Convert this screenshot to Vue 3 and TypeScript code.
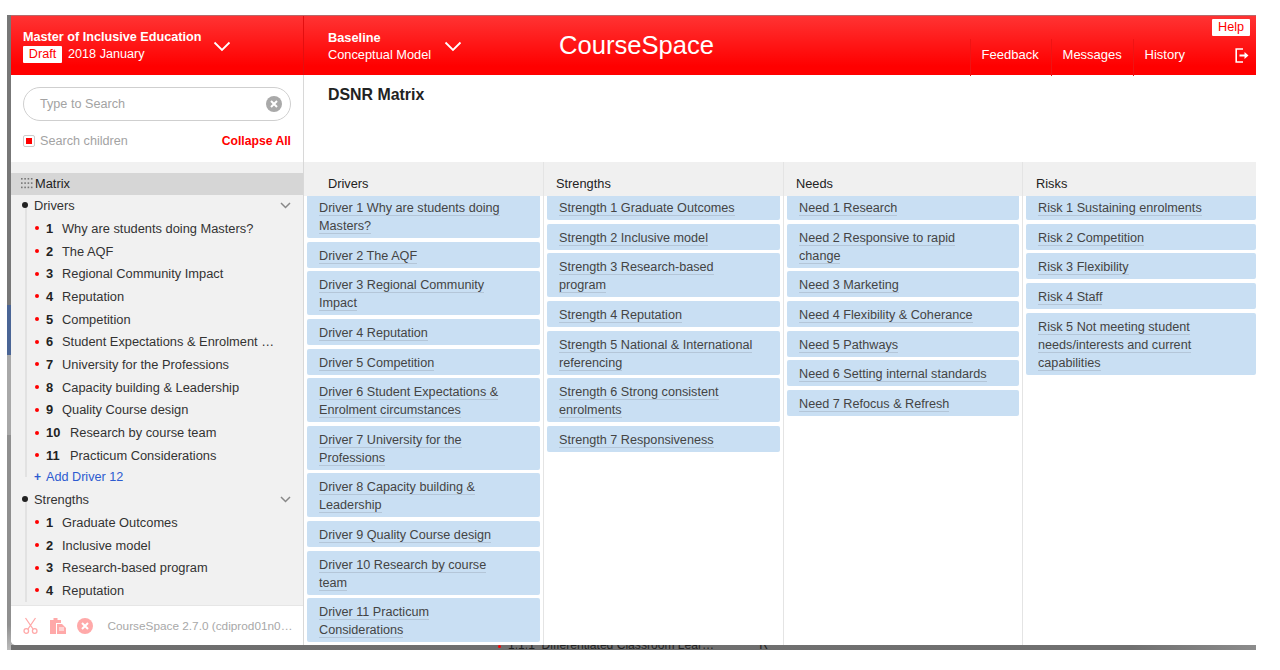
<script setup lang="ts">
interface Section {
  name: string;
  items: string[];
  add?: string;
}

const tree: Section[] = [
  {
    name: "Drivers",
    items: [
      "Why are students doing Masters?",
      "The AQF",
      "Regional Community Impact",
      "Reputation",
      "Competition",
      "Student Expectations & Enrolment …",
      "University for the Professions",
      "Capacity building & Leadership",
      "Quality Course design",
      "Research by course team",
      "Practicum Considerations",
    ],
    add: "Add Driver 12",
  },
  {
    name: "Strengths",
    items: ["Graduate Outcomes", "Inclusive model", "Research-based program", "Reputation"],
  },
];

const columns = [
  {
    title: "Drivers",
    cards: [
      ["Driver 1 Why are students doing", "Masters?"],
      ["Driver 2 The AQF"],
      ["Driver 3 Regional Community", "Impact"],
      ["Driver 4 Reputation"],
      ["Driver 5 Competition"],
      ["Driver 6 Student Expectations &", "Enrolment circumstances"],
      ["Driver 7 University for the", "Professions"],
      ["Driver 8 Capacity building &", "Leadership"],
      ["Driver 9 Quality Course design"],
      ["Driver 10 Research by course", "team"],
      ["Driver 11 Practicum", "Considerations"],
    ],
  },
  {
    title: "Strengths",
    cards: [
      ["Strength 1 Graduate Outcomes"],
      ["Strength 2 Inclusive model"],
      ["Strength 3 Research-based", "program"],
      ["Strength 4 Reputation"],
      ["Strength 5 National & International", "referencing"],
      ["Strength 6 Strong consistent", "enrolments"],
      ["Strength 7 Responsiveness"],
    ],
  },
  {
    title: "Needs",
    cards: [
      ["Need 1 Research"],
      ["Need 2 Responsive to rapid", "change"],
      ["Need 3 Marketing"],
      ["Need 4 Flexibility & Coherance"],
      ["Need 5 Pathways"],
      ["Need 6 Setting internal standards"],
      ["Need 7 Refocus & Refresh"],
    ],
  },
  {
    title: "Risks",
    cards: [
      ["Risk 1 Sustaining enrolments"],
      ["Risk 2 Competition"],
      ["Risk 3 Flexibility"],
      ["Risk 4 Staff"],
      ["Risk 5 Not meeting student", "needs/interests and current", "capabilities"],
    ],
  },
];
</script>

<template>
  <div class="page">
    <div class="frame">
      <div class="app">
        <header class="topbar">
          <div class="course">
            <div class="course-text">
              <div class="course-name">Master of Inclusive Education</div>
              <div class="course-sub"><span class="draft">Draft</span>2018 January</div>
            </div>
            <svg class="chev" width="18" height="11" viewBox="0 0 18 11"><path d="M1.5 1.5 9 9l7.5-7.5" fill="none" stroke="#fff" stroke-width="1.8" /></svg>
          </div>
          <div class="model">
            <div class="model-text">
              <div class="model-name">Baseline</div>
              <div>Conceptual Model</div>
            </div>
            <svg class="chev" width="18" height="11" viewBox="0 0 18 11"><path d="M1.5 1.5 9 9l7.5-7.5" fill="none" stroke="#fff" stroke-width="1.8" /></svg>
          </div>
          <div class="brand">CourseSpace</div>
          <nav class="nav">
            <a>Feedback</a>
            <a>Messages</a>
            <a>History</a>
          </nav>
          <span class="help">Help</span>
          <svg class="logout" width="14" height="15" viewBox="0 0 14 15">
            <path d="M8 1H1.2v13H8" fill="none" stroke="#fff" stroke-width="1.6" />
            <path d="M4.5 6.5h5V4l4 3.5-4 3.5V8.500h-5z" fill="#fff" />
          </svg>
        </header>

        <div class="body">
          <aside class="side">
            <div class="search-box">
              <div class="search">
                <span class="placeholder">Type to Search</span>
                <svg width="16" height="16" viewBox="0 0 16 16">
                  <circle cx="8" cy="8" r="8" fill="#a9a9a9" />
                  <path d="M5 5l6 6M11 5l-6 6" stroke="#fff" stroke-width="2" />
                </svg>
              </div>
              <div class="search-opts">
                <span class="check"><i></i></span>
                <span class="opt-label">Search children</span>
                <span class="collapse">Collapse All</span>
              </div>
            </div>
            <div class="tree">
              <div class="matrix">
                <svg width="12" height="12" viewBox="0 0 12 12" fill="#777">
                  <template v-for="r in 3" :key="r">
                    <rect v-for="c in 4" :key="c" :x="(c - 1) * 3.3" :y="(r - 1) * 4.300 + 1" width="1.6" height="1.600" />
                  </template>
                </svg>
                Matrix
              </div>
              <div v-for="s in tree" :key="s.name" class="section">
                <div class="section-head">
                  <i class="dot"></i>
                  <span>{{ s.name }}</span>
                  <svg width="11" height="7" viewBox="0 0 11 7"><path d="M1 1l4.500 4.500L10 1" fill="none" stroke="#888" stroke-width="1.500" /></svg>
                </div>
                <div v-for="(item, i) in s.items" :key="item" class="item">
                  <i class="red-dot"></i>
                  <b :class="{ wide: i >= 9 }">{{ i + 1 }}</b>
                  <span>{{ item }}</span>
                </div>
                <div v-if="s.add" class="add"><span class="plus">+</span>{{ s.add }}</div>
              </div>
            </div>
            <footer class="side-foot">
              <svg width="15" height="17" viewBox="0 0 15 17" fill="none" stroke="#ffa9a9" stroke-width="1.300">
                <path d="M2.500 1 10 12M12.500 1 5 12" />
                <circle cx="3.300" cy="14" r="2.300" />
                <circle cx="11.700" cy="14" r="2.300" />
              </svg>
              <svg width="16" height="17" viewBox="0 0 16 17">
                <path d="M0 3h3.500V1h4v2H11v3H6v11H0z" fill="#ffa9a9" />
                <path d="M7 7h5l4 4v6H7z" fill="#ffa9a9" />
                <path d="M9 11h5M9 13h5" stroke="#fff" />
              </svg>
              <svg width="16" height="16" viewBox="0 0 16 16">
                <circle cx="8" cy="8" r="8" fill="#ffa9a9" />
                <path d="M5 5l6 6M11 5l-6 6" stroke="#fff" stroke-width="2" />
              </svg>
              <span class="version">CourseSpace 2.7.0 (cdiprod01n0…</span>
            </footer>
          </aside>

          <main class="main">
            <div class="title-area"><h1>DSNR Matrix</h1></div>
            <div class="matrix-grid">
              <section v-for="col in columns" :key="col.title" class="col">
                <div class="col-head">{{ col.title }}</div>
                <div class="cards">
                  <div v-for="card in col.cards" :key="card[0]" class="card">
                    <div v-for="line in card" :key="line"><span class="line">{{ line }}</span></div>
                  </div>
                </div>
              </section>
            </div>
          </main>
        </div>
      </div>
      <div class="peek">
        <i class="peek-dot"></i>
        <span class="peek-text">1.1.1 &nbsp;Differentiated Classroom Lear…</span>
        <span class="peek-r">R</span>
      </div>
    </div>
  </div>
</template>

<style>
html,
body {
  background: #fff;
}
</style>

<style scoped>
.page {
  width: 1280px;
  height: 670px;
  padding: 15px 24px 20px 7px;
  box-sizing: border-box;
  overflow: hidden;
  font-family: "Liberation Sans", Arial, sans-serif;
  font-size: 12.65px;
  color: #333;
}

.frame {
  height: 635px;
  padding-left: 4px;
  /* the window behind shows along the left edge */
  background: linear-gradient(#777 0 290px, #4a6595 290px 340px, #a8a8a8 340px 420px, #8f8f8f 420px 610px, #bbb);
}

.app {
  height: 630px;
  background: #fff;
  border-bottom-left-radius: 5px;
  overflow: hidden;
  display: flex;
  flex-direction: column;
}

.topbar {
  position: relative;
  height: 60px;
  flex: none;
  display: flex;
  color: #fff;
  background: linear-gradient(#ff3333, #ff0000 85%);
  border-top: 1px solid #b8686a;
  box-sizing: border-box;
}

.course {
  width: 293px;
  flex: none;
  box-sizing: border-box;
  padding: 13px 0 0 12px;
  display: flex;
  border-right: 1px solid #e30f10;
}

.course-name,
.model-name {
  font-weight: bold;
  line-height: 17px;
}

.course-sub {
  line-height: 17px;
  display: flex;
  align-items: center;
}

.draft {
  background: #fff;
  color: #f00;
  width: 39px;
  height: 17px;
  margin-right: 6px;
  border-radius: 1px;
  text-align: center;
}

.chev {
  flex: none;
}

.course .chev {
  margin: 12px 0 0 12px;
}

.model {
  width: 255px;
  flex: none;
  box-sizing: border-box;
  padding: 13px 0 0 24px;
  display: flex;
}

.model-text {
  line-height: 17px;
  font-size: 12.8px;
}

.model .chev {
  margin: 12px 0 0 13px;
}

.brand {
  font-size: 25.6px;
  padding-top: 13px;
  line-height: 32px;
}

.nav {
  display: flex;
  margin-left: auto;
  margin-right: 71px;
  margin-top: 23px;
  height: 37px;
  font-size: 13px;
}

.nav a {
  border-left: 1px solid #ee1414;
  padding: 8px 0 0 11px;
  line-height: 15px;
}

.nav a:nth-child(1) {
  width: 69px;
}

.nav a:nth-child(2) {
  width: 70px;
}

.help {
  position: absolute;
  right: 6px;
  top: 3px;
  width: 38px;
  height: 17px;
  line-height: 17px;
  border-radius: 1px;
  text-align: center;
  background: #fff;
  color: #f00;
}

.logout {
  position: absolute;
  right: 7px;
  top: 32px;
}

.body {
  flex: 1;
  display: flex;
  min-height: 0;
}

.side {
  width: 293px;
  flex: none;
  display: flex;
  flex-direction: column;
  background: #f1f1f1;
  border-right: 1px solid #d8d8d8;
  box-sizing: border-box;
}

.search-box {
  height: 87px;
  flex: none;
  background: #fff;
  box-sizing: border-box;
  padding: 12px 12px 0;
}

.search {
  height: 34px;
  box-sizing: border-box;
  border: 1px solid #cfcfcf;
  border-radius: 17px;
  padding: 0 8px 0 16px;
  display: flex;
  align-items: center;
  justify-content: space-between;
  color: #a3a3a3;
}

.placeholder {
  margin-bottom: 1px;
}

.search-opts {
  display: flex;
  align-items: center;
  margin-top: 13px;
  color: #a3a3a3;
}

.check {
  width: 12px;
  height: 12px;
  box-sizing: border-box;
  border: 1px solid #ccc;
  border-radius: 2px;
  display: flex;
  align-items: center;
  justify-content: center;
  margin-right: 5px;
}

.check i {
  width: 6px;
  height: 6px;
  background: #f00;
}

.collapse {
  margin-left: auto;
  color: #f00;
  font-weight: bold;
  font-size: 12.2px;
}

.tree {
  flex: 1;
  min-height: 0;
  overflow: hidden;
  padding-top: 11px;
  font-size: 12.85px;
}

.matrix {
  height: 22px;
  box-sizing: border-box;
  padding-bottom: 2px;
  background: #d6d6d6;
  display: flex;
  align-items: center;
  gap: 2px;
  padding-left: 10px;
  color: #222;
}

.section-head {
  height: 22px;
  box-sizing: border-box;
  display: flex;
  align-items: center;
  padding: 0 12px 2px 11px;
  color: #333;
  background: linear-gradient(#e2e2e2, #e2e2e2) 14px 11px / 2px 11px no-repeat;
}

.section-head span {
  flex: 1;
}

.dot {
  width: 6px;
  height: 6px;
  border-radius: 50%;
  background: #222;
  margin-right: 6px;
}

.item {
  height: 22.7px;
  display: flex;
  align-items: center;
  padding-left: 24px;
  white-space: nowrap;
  background: linear-gradient(#e2e2e2, #e2e2e2) 14px 0 / 2px 100% no-repeat;
}

.red-dot {
  width: 4px;
  height: 4px;
  border-radius: 50%;
  background: #f00;
  margin-right: 7px;
}

.item b {
  width: 16px;
  color: #222;
}

.item b.wide {
  width: 24px;
}

.add {
  height: 22.5px;
  box-sizing: border-box;
  line-height: 21px;
  padding-left: 23px;
  font-size: 12.65px;
  color: #2d5bd0;
  background: linear-gradient(#e2e2e2, #e2e2e2) 14px 0 / 2px 10px no-repeat;
}

.plus {
  font-weight: bold;
  margin-right: 5px;
  font-size: 12px;
}

.side-foot {
  height: 40px;
  flex: none;
  background: #fff;
  border-top: 1px solid #e6e6e6;
  box-sizing: border-box;
  display: flex;
  align-items: center;
  gap: 11.500px;
  padding: 0 0 0 12px;
}

.version {
  font-size: 11.8px;
  color: #a8a8a8;
  margin-left: 3px;
  white-space: nowrap;
}

.main {
  flex: 1;
  min-width: 0;
  display: flex;
  flex-direction: column;
}

.title-area {
  height: 87px;
  flex: none;
  padding: 10px 0 0 24px;
  box-sizing: border-box;
}

h1 {
  margin: 0;
  font-size: 15.9px;
  line-height: 20px;
  color: #222;
}

.matrix-grid {
  flex: 1;
  min-height: 0;
  display: flex;
  overflow: hidden;
}

.col {
  flex: none;
  width: 240px;
  border-right: 1px solid #e4e4e4;
  box-sizing: border-box;
  position: relative;
}

.col:nth-child(3) {
  width: 239px;
}

.col:last-child {
  flex: 1;
  border-right: 0;
}

.col-head {
  position: relative;
  z-index: 1;
  height: 34px;
  box-sizing: border-box;
  background: #f0f0f0;
  padding: 12px 0 0 12px;
  line-height: 20px;
  font-size: 12.8px;
  color: #222;
}

.col:first-child .col-head {
  padding-left: 24px;
}

.col:last-child .col-head {
  padding-left: 13px;
}

.cards {
  padding: 0 3px;
  margin-top: -1.8px;
}

.col:last-child .cards {
  padding-right: 0;
}

.card {
  background: #c9dff3;
  border-radius: 2px;
  padding: 5px 12px 3px;
  margin-bottom: 3.6px;
  line-height: 18px;
  color: #444;
}

.line {
  border-bottom: 1px solid #b4c6d8;
}

.peek {
  height: 5px;
  overflow: hidden;
  display: flex;
  font-size: 12.1px;
  line-height: 13px;
  color: #222;
  padding-left: 487px;
  background: linear-gradient(90deg, #6e6e6e, #707070 90%, #8c8c8c);
}

.peek-dot {
  width: 3px;
  height: 3px;
  background: #f00;
  border-radius: 50%;
  margin-right: 7px;
}

.peek-text {
  margin-top: -6px;
}

.peek-r {
  margin-top: -6px;
  margin-left: 45px;
}
</style>
